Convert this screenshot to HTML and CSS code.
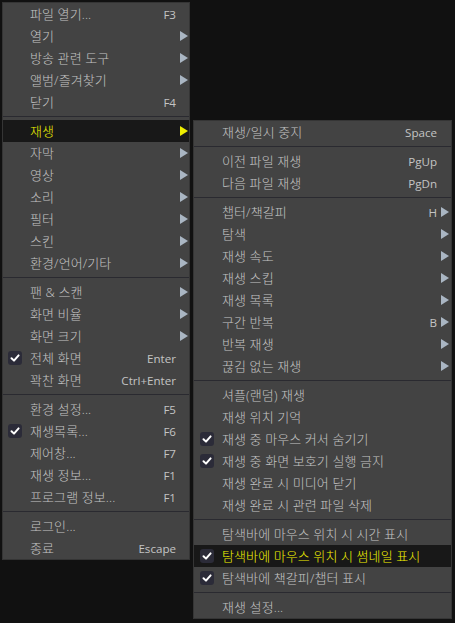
FILE: index.html
```html
<!DOCTYPE html>
<html lang="ko">
<head>
<meta charset="utf-8">
<title>Menu</title>
<link rel="stylesheet" href="styles.css">
</head>
<body>
<div class="screen">
  <div class="menu main">
    <div class="item"><span class="chk"></span><span class="label">파일 열기...</span><span class="key">F3</span><span class="arr"></span></div>
    <div class="item"><span class="chk"></span><span class="label">열기</span><span class="key"></span><span class="arr on"></span></div>
    <div class="item"><span class="chk"></span><span class="label">방송 관련 도구</span><span class="key"></span><span class="arr on"></span></div>
    <div class="item"><span class="chk"></span><span class="label">앨범/즐겨찾기</span><span class="key"></span><span class="arr on"></span></div>
    <div class="item"><span class="chk"></span><span class="label">닫기</span><span class="key">F4</span><span class="arr"></span></div>
    <div class="sep"></div>
    <div class="item hl"><span class="chk"></span><span class="label">재생</span><span class="key"></span><span class="arr on"></span></div>
    <div class="item"><span class="chk"></span><span class="label">자막</span><span class="key"></span><span class="arr on"></span></div>
    <div class="item"><span class="chk"></span><span class="label">영상</span><span class="key"></span><span class="arr on"></span></div>
    <div class="item"><span class="chk"></span><span class="label">소리</span><span class="key"></span><span class="arr on"></span></div>
    <div class="item"><span class="chk"></span><span class="label">필터</span><span class="key"></span><span class="arr on"></span></div>
    <div class="item"><span class="chk"></span><span class="label">스킨</span><span class="key"></span><span class="arr on"></span></div>
    <div class="item"><span class="chk"></span><span class="label">환경/언어/기타</span><span class="key"></span><span class="arr on"></span></div>
    <div class="sep"></div>
    <div class="item"><span class="chk"></span><span class="label">팬 &amp; 스캔</span><span class="key"></span><span class="arr on"></span></div>
    <div class="item"><span class="chk"></span><span class="label">화면 비율</span><span class="key"></span><span class="arr on"></span></div>
    <div class="item"><span class="chk"></span><span class="label">화면 크기</span><span class="key"></span><span class="arr on"></span></div>
    <div class="item"><span class="chk"><span class="box"><svg viewBox="0 0 14 14"><polyline points="3.5,7.2 6,9.6 10.6,4.4"/></svg></span></span><span class="label">전체 화면</span><span class="key">Enter</span><span class="arr"></span></div>
    <div class="item"><span class="chk"></span><span class="label">꽉찬 화면</span><span class="key">Ctrl+Enter</span><span class="arr"></span></div>
    <div class="sep"></div>
    <div class="item"><span class="chk"></span><span class="label">환경 설정...</span><span class="key">F5</span><span class="arr"></span></div>
    <div class="item"><span class="chk"><span class="box"><svg viewBox="0 0 14 14"><polyline points="3.5,7.2 6,9.6 10.6,4.4"/></svg></span></span><span class="label">재생목록...</span><span class="key">F6</span><span class="arr"></span></div>
    <div class="item"><span class="chk"></span><span class="label">제어창...</span><span class="key">F7</span><span class="arr"></span></div>
    <div class="item"><span class="chk"></span><span class="label">재생 정보...</span><span class="key">F1</span><span class="arr"></span></div>
    <div class="item"><span class="chk"></span><span class="label">프로그램 정보...</span><span class="key">F1</span><span class="arr"></span></div>
    <div class="sep"></div>
    <div class="item"><span class="chk"></span><span class="label">로그인...</span><span class="key"></span><span class="arr"></span></div>
    <div class="item"><span class="chk"></span><span class="label">종료</span><span class="key">Escape</span><span class="arr"></span></div>
  </div>

  <div class="menu submenu">
    <div class="item"><span class="chk"></span><span class="label">재생/일시 중지</span><span class="key">Space</span><span class="arr"></span></div>
    <div class="sep"></div>
    <div class="item"><span class="chk"></span><span class="label">이전 파일 재생</span><span class="key">PgUp</span><span class="arr"></span></div>
    <div class="item"><span class="chk"></span><span class="label">다음 파일 재생</span><span class="key">PgDn</span><span class="arr"></span></div>
    <div class="sep"></div>
    <div class="item"><span class="chk"></span><span class="label">챕터/책갈피</span><span class="key">H</span><span class="arr on"></span></div>
    <div class="item"><span class="chk"></span><span class="label">탐색</span><span class="key"></span><span class="arr on"></span></div>
    <div class="item"><span class="chk"></span><span class="label">재생 속도</span><span class="key"></span><span class="arr on"></span></div>
    <div class="item"><span class="chk"></span><span class="label">재생 스킵</span><span class="key"></span><span class="arr on"></span></div>
    <div class="item"><span class="chk"></span><span class="label">재생 목록</span><span class="key"></span><span class="arr on"></span></div>
    <div class="item"><span class="chk"></span><span class="label">구간 반복</span><span class="key">B</span><span class="arr on"></span></div>
    <div class="item"><span class="chk"></span><span class="label">반복 재생</span><span class="key"></span><span class="arr on"></span></div>
    <div class="item"><span class="chk"></span><span class="label">끊김 없는 재생</span><span class="key"></span><span class="arr on"></span></div>
    <div class="sep"></div>
    <div class="item"><span class="chk"></span><span class="label">셔플(랜덤) 재생</span><span class="key"></span><span class="arr"></span></div>
    <div class="item"><span class="chk"></span><span class="label">재생 위치 기억</span><span class="key"></span><span class="arr"></span></div>
    <div class="item"><span class="chk"><span class="box"><svg viewBox="0 0 14 14"><polyline points="3.5,7.2 6,9.6 10.6,4.4"/></svg></span></span><span class="label">재생 중 마우스 커서 숨기기</span><span class="key"></span><span class="arr"></span></div>
    <div class="item"><span class="chk"><span class="box"><svg viewBox="0 0 14 14"><polyline points="3.5,7.2 6,9.6 10.6,4.4"/></svg></span></span><span class="label">재생 중 화면 보호기 실행 금지</span><span class="key"></span><span class="arr"></span></div>
    <div class="item"><span class="chk"></span><span class="label">재생 완료 시 미디어 닫기</span><span class="key"></span><span class="arr"></span></div>
    <div class="item"><span class="chk"></span><span class="label">재생 완료 시 관련 파일 삭제</span><span class="key"></span><span class="arr"></span></div>
    <div class="sep"></div>
    <div class="item"><span class="chk"></span><span class="label">탐색바에 마우스 위치 시 시간 표시</span><span class="key"></span><span class="arr"></span></div>
    <div class="item hl"><span class="chk"><span class="box"><svg viewBox="0 0 14 14"><polyline points="3.5,7.2 6,9.6 10.6,4.4"/></svg></span></span><span class="label">탐색바에 마우스 위치 시 썸네일 표시</span><span class="key"></span><span class="arr"></span></div>
    <div class="item"><span class="chk"><span class="box"><svg viewBox="0 0 14 14"><polyline points="3.5,7.2 6,9.6 10.6,4.4"/></svg></span></span><span class="label">탐색바에 책갈피/챕터 표시</span><span class="key"></span><span class="arr"></span></div>
    <div class="sep"></div>
    <div class="item"><span class="chk"></span><span class="label">재생 설정...</span><span class="key"></span><span class="arr"></span></div>
  </div>
</div>
</body>
</html>
```

FILE: styles.css
```css
html, body {
  margin: 0;
  padding: 0;
  background: #111111;
}

body {
  width: 455px;
  height: 623px;
  overflow: hidden;
  font-family: "Open Sans", "Noto Sans CJK KR", sans-serif;
  font-size: 12px;
}

.screen {
  display: flex;
  align-items: flex-start;
  padding: 2px 0 0 2px;
}

.menu {
  background: #434343;
  border: 1px solid #353535;
  display: flex;
  flex-direction: column;
}

.main {
  width: 186px;
}

.submenu {
  width: 257px;
  margin-left: 3px;
  margin-top: 118px;
}

.item {
  display: grid;
  align-items: center;
  height: 22px;
  color: #c4c4c4;
  white-space: nowrap;
}

.main .item {
  grid-template-columns: 27px 1fr auto 13px;
}

.submenu .item {
  grid-template-columns: 28px 1fr auto 14px;
}

.item.hl {
  background: #181818;
  color: #f2f200;
}

.chk {
  display: flex;
  align-items: center;
  height: 22px;
}

.main .chk {
  padding-left: 5px;
}

.submenu .chk {
  padding-left: 6px;
}

.box {
  width: 14px;
  height: 14px;
  border-radius: 3px;
  background: #2b2b38;
  display: block;
}

.box svg {
  width: 14px;
  height: 14px;
  display: block;
}

.box polyline {
  fill: none;
  stroke: #ffffff;
  stroke-width: 2;
  stroke-linecap: round;
  stroke-linejoin: round;
}

.label {
  overflow: hidden;
  font-size: 13px;
  font-weight: 300;
  letter-spacing: 0.1px;
  margin-bottom: 2px;
}

.key {
  text-align: right;
  font-size: 11.6px;
}

.arr {
  display: flex;
  align-items: center;
  height: 22px;
  padding-left: 4px;
}

.arr.on::before {
  content: "";
  display: block;
  width: 0;
  height: 0;
  border-left: 8px solid #aab6c3;
  border-top: 5px solid transparent;
  border-bottom: 5px solid transparent;
}

.item.hl .arr.on::before {
  border-left-color: #eded00;
}

.sep {
  height: 7px;
  display: flex;
  align-items: center;
}

.sep::before {
  content: "";
  display: block;
  width: 100%;
  height: 1px;
  background: #2a2a30;
}
```
